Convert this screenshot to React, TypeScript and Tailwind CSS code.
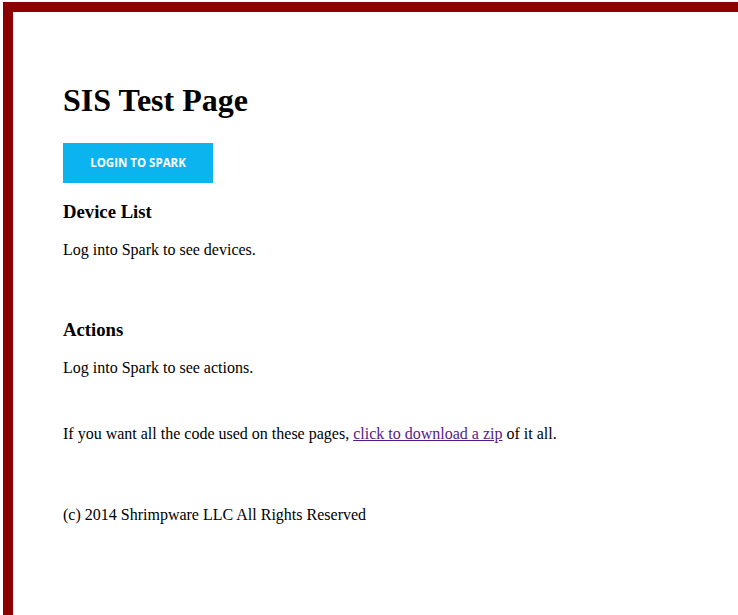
import React from 'react';

const serif = { fontFamily: '"Liberation Serif", "Times New Roman", serif' };

const App: React.FC = () => {
  return (
    <div className="min-h-screen bg-white flex flex-col pt-[2px] pl-[3px]" style={serif}>
      <div className="flex-1 border-l-[10px] border-t-[10px] border-[#8b0000] pl-[50px] pt-[70px] text-black">
        <h1 className="text-[32px] font-bold leading-[37px]">SIS Test Page</h1>

        <button
          className="mt-[24px] h-[40px] w-[150px] bg-[#0cb4ef] text-white text-[11.5px] font-bold uppercase flex items-center justify-center"
          style={{ fontFamily: '"Open Sans", "Liberation Sans", sans-serif' }}
        >
          Login to Spark
        </button>

        <h3 className="mt-[18px] text-[18.72px] font-bold leading-[22px]">Device List</h3>
        <p className="mt-[18px] text-[16px] leading-[18px]">Log into Spark to see devices.</p>

        <h3 className="mt-[60px] text-[18.72px] font-bold leading-[22px]">Actions</h3>
        <p className="mt-[18px] text-[16px] leading-[18px]">Log into Spark to see actions.</p>

        <p className="mt-[48px] text-[16px] leading-[18px]">
          If you want all the code used on these pages,{' '}
          <a href="#" className="text-[#551a8b] underline">click to download a zip</a> of it all.
        </p>

        <p className="mt-[63px] text-[16px] leading-[18px]">(c) 2014 Shrimpware LLC All Rights Reserved</p>
      </div>
    </div>
  );
};

export default App;
